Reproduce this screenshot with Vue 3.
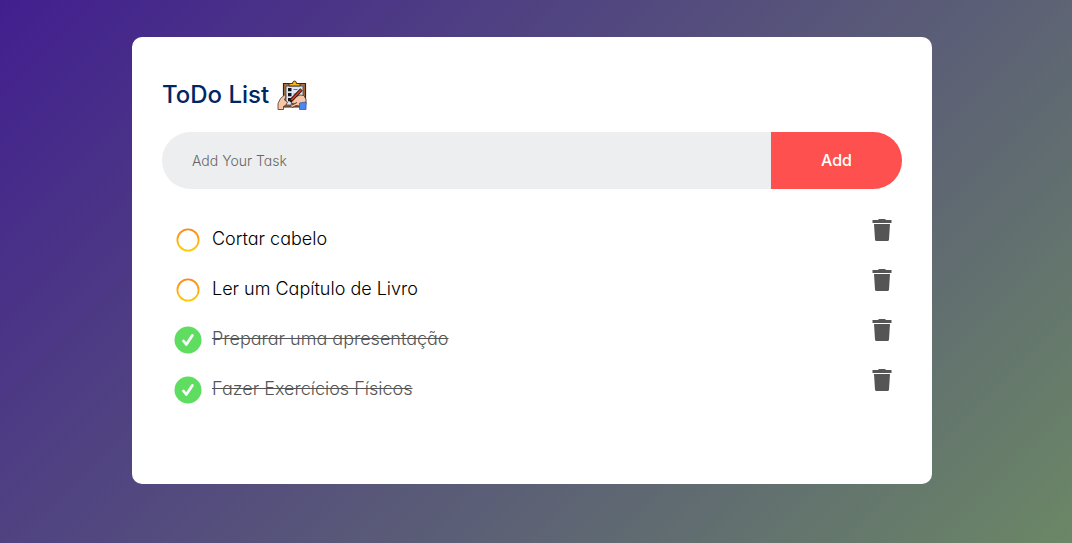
<script setup>
import { ref } from 'vue'

const draft = ref('')
const tasks = ref([
  { id: 1, text: 'Cortar cabelo', done: false },
  { id: 2, text: 'Ler um Capítulo de Livro', done: false },
  { id: 3, text: 'Preparar uma apresentação', done: true },
  { id: 4, text: 'Fazer Exercícios Físicos', done: true }
])

function addTask() {
  const text = draft.value.trim()
  if (!text) return
  tasks.value.push({ id: Date.now(), text, done: false })
  draft.value = ''
}

function removeTask(id) {
  tasks.value = tasks.value.filter((task) => task.id !== id)
}
</script>

<template>
  <div class="page">
    <main class="card">
      <h1 class="title">
        ToDo List
        <svg class="logo" viewBox="0 0 30 30" aria-hidden="true">
          <path d="M6.500 3.500h22v23.500h-22z" fill="#a9713d" stroke="#30241e" stroke-width="1.200" />
          <path d="M9 6h17v19H9z" fill="#dfe8f6" stroke="#4a4038" stroke-width="0.800" />
          <path d="M12 3.500h3.500q0-2.500 2-2.500t2 2.500H23V6H12z" fill="#f7b32a" stroke="#3f2b14" stroke-width="0.900" />
          <path d="M11 8h3.500v3.200H11zM11 13h3.500v3.200H11zM11 18h3.500v3.200H11z" fill="#15171d" />
          <path d="M16.500 9.500h4M16.500 14h3" stroke="#68758a" stroke-width="1" />
          <path d="M1 29.500v-6l2.500-5 4-3.500 1.500 1-1.500 4 3 2-1.500 3-2.500 1.500v3z" fill="#f6c6a7" stroke="#4b3328" stroke-width="0.800" />
          <path d="M14 21l4-4 5-2 4 .500 2 4v5l-6 1.500-4-.500-4 2-1.500-1.500 3-3-2 1z" fill="#f6c6a7" stroke="#4b3328" stroke-width="0.800" />
          <path d="M13 21.500L24.500 9.500" stroke="#35130e" stroke-width="3.400" />
          <path d="M14.500 20L24.500 9.500" stroke="#c94627" stroke-width="1.600" />
          <path d="M15 25l5-2.500" stroke="#4b3328" stroke-width="1" />
          <path d="M22.500 23l6.500-1v7.500h-6.500z" fill="#4d86ee" stroke="#345cad" stroke-width="0.800" />
        </svg>
      </h1>

      <form class="row" @submit.prevent="addTask">
        <input v-model="draft" class="field" type="text" placeholder="Add Your Task" aria-label="Add Your Task" />
        <button class="add" type="submit">Add</button>
      </form>

      <ul class="tasks">
        <li v-for="task in tasks" :key="task.id" class="task">
          <label class="label">
            <input v-model="task.done" class="tick" type="checkbox" />
            <svg v-if="task.done" class="mark" viewBox="0 0 28 28" aria-hidden="true">
              <circle cx="14" cy="14" r="13.500" fill="#5fdd60" />
              <path d="M9.500 15l2.800 3.500 6-9" fill="none" stroke="#fff" stroke-width="2.800" stroke-linecap="round" stroke-linejoin="round" />
            </svg>
            <svg v-else class="mark" viewBox="0 0 28 28" aria-hidden="true">
              <defs>
                <linearGradient :id="`ring-${task.id}`" x1="0" y1="0" x2="0" y2="1">
                  <stop offset="0" stop-color="#fb8a1e" />
                  <stop offset="1" stop-color="#ffcc0a" />
                </linearGradient>
              </defs>
              <circle cx="14" cy="14" r="10.600" fill="none" :stroke="`url(#ring-${task.id})`" stroke-width="1.800" />
            </svg>
            <span class="text" :class="{ done: task.done }">{{ task.text }}</span>
          </label>
          <button class="remove" type="button" :aria-label="`Delete ${task.text}`" @click="removeTask(task.id)">
            <svg class="bin" viewBox="0 0 24 24" aria-hidden="true">
              <path d="M2.500 2H8q.5-1 1.500-1h5q1 0 1.500 1h5.500v3h-19zM4 6h16l-1 15.500q-.1 1.500-1.500 1.500h-11Q5.100 23 5 21.500z" fill="#555" />
            </svg>
          </button>
        </li>
      </ul>
    </main>
  </div>
</template>

<style>
body {
  margin: 0;
}
</style>

<style scoped>
.page {
  box-sizing: border-box;
  min-height: 100vh;
  padding: 37px 18px 37px 10px;
  background: linear-gradient(135deg, #421f8f, #6b8766);
  font-family: Inter, "Open Sans", sans-serif;
  font-feature-settings: "cv11";
}
.card {
  box-sizing: border-box;
  max-width: 800px;
  margin: 0 auto;
  padding: 40px 30px 70px;
  border-radius: 10px;
  background: #fff;
}
.title {
  display: flex;
  align-items: center;
  gap: 8px;
  margin: 0 0 19px;
  color: #002765;
  font-size: 24px;
  font-weight: 500;
  line-height: 36px;
}
.logo {
  width: 30px;
  height: 30px;
}
.row {
  display: flex;
  margin-bottom: 25px;
  border-radius: 30px;
  background: #edeef0;
  overflow: hidden;
}
.field {
  flex: 1;
  min-width: 0;
  padding: 0 30px;
  border: 0;
  outline: 0;
  background: transparent;
  color: #333;
  font: inherit;
  font-feature-settings: inherit;
  font-size: 14px;
  font-weight: 300;
}
.field::placeholder {
  color: #666;
  opacity: 1;
}
.add {
  padding: 16px 50px;
  border: 0;
  background: #ff5050;
  color: #fff;
  font: inherit;
  font-feature-settings: inherit;
  font-size: 16px;
  font-weight: 500;
  line-height: 25px;
  cursor: pointer;
}
.tasks {
  margin: 0;
  padding: 0;
  list-style: none;
}
.task {
  display: flex;
  align-items: flex-start;
  justify-content: space-between;
  height: 50px;
}
.label {
  position: relative;
  display: flex;
  align-items: center;
  gap: 10px;
  height: 52px;
  padding-left: 12px;
  cursor: pointer;
}
.tick {
  position: absolute;
  width: 28px;
  height: 28px;
  margin: 0;
  opacity: 0;
}
.mark {
  width: 28px;
  height: 28px;
}
.text {
  padding-bottom: 2px;
  color: #000;
  font-size: 18px;
  font-weight: 300;
  line-height: 24px;
}
.done {
  color: #555;
  text-decoration: line-through;
}
.remove {
  margin: 4px 8px 0 0;
  padding: 0;
  border: 0;
  background: none;
  cursor: pointer;
}
.bin {
  display: block;
  width: 24px;
  height: 24px;
}
</style>
